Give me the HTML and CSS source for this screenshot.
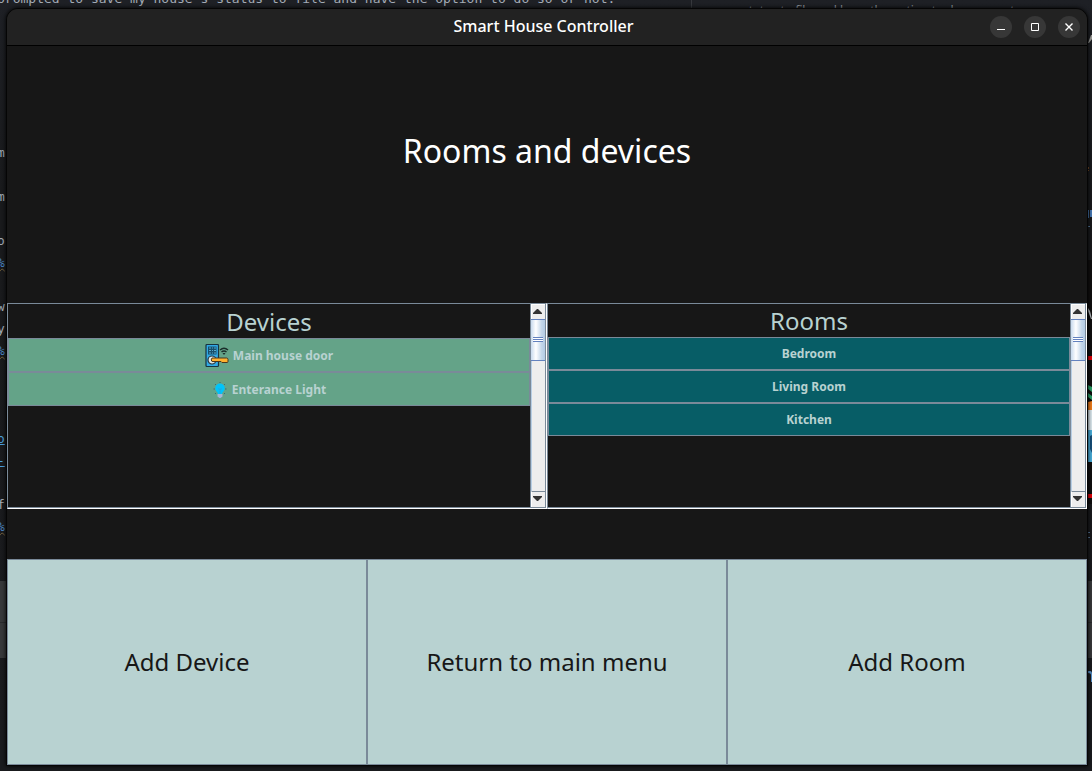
FILE: index.html
```html
<!DOCTYPE html>
<html lang="en">
<head>
<meta charset="utf-8">
<title>Smart House Controller</title>
<link rel="stylesheet" href="styles.css">
</head>
<body>
<div class="backdrop" aria-hidden="true">
<p class="code code-top">prompted to save my house's status to file and have the option to do so or not.</p>
<pre class="code code-left">m

m

o
<span class="key">%</span>

w
y
<span class="key">%</span>



<span class="link">o</span>
<span class="link">-</span>

f
<span class="key">%</span></pre>
<div class="divider"></div>
<p class="note">status to file and have the option to do so or not.</p>
<div class="dock"></div>
<svg class="edge" width="4" height="771" viewBox="0 0 4 771">
<rect y="260" width="4" height="244" fill="#100f0f"/>
<path d="M0 43l3-8h1v4l-3 4z" fill="#9c9c98"/>
<path d="M0 167h1v2H0zM0 170h1v1H0z" fill="#80512c"/>
<path d="M0 210h1v8H0zM2 210h2v7H2z" fill="#4779b4"/>
<path d="M0 226h2v1H0z" fill="#55799b"/>
<path d="M0 308l2 3 2 8h-1l-3-8z" fill="#b9bdc0"/>
<path d="M0 356h4v4H0zM0 494h4v4H0z" fill="#df0007"/>
<path d="M0 385l4 2v5l-4-3zM0 393l4 3v4l-4-3z" fill="#28a066"/>
<path d="M0 402l4-1v9H0z" fill="#f07d1c"/>
<path d="M0 410h4v20H0z" fill="#dce8ee"/>
<path d="M0 430h4v32H0z" fill="#48aedb"/>
<path d="M2 436l2-1v18l-2-4z" fill="#164e7a"/>
<path d="M0 532h2v1H0zM0 537h2v1H0z" fill="#59799b"/>
<path d="M0 671h2q2 0 2 3v8H3v-7q0-2-3-2z" fill="#5793cc"/>
</svg>
</div>

<div class="window">
<header class="titlebar">
<h1 class="caption">Smart House Controller</h1>
<div class="controls">
<button class="control" type="button" aria-label="Minimize"><svg width="22" height="22" viewBox="0 0 22 22"><path d="M7 13.5h8" stroke="#fff" fill="none"/></svg></button>
<button class="control" type="button" aria-label="Maximize"><svg width="22" height="22" viewBox="0 0 22 22"><path d="M7.5 7.5h7v7h-7z" stroke="#fff" fill="none"/></svg></button>
<button class="control" type="button" aria-label="Close"><svg width="22" height="22" viewBox="0 0 22 22"><path d="M7.5 7.500l7 7M14.500 7.500l-7 7" stroke="#fff" stroke-width="1.400" fill="none"/></svg></button>
</div>
</header>

<main class="content">
<h2 class="heading">Rooms and devices</h2>

<div class="panels">
<section class="panel">
<div class="list devices">
<h3 class="list-title">Devices</h3>
<button class="row" type="button">
<svg width="24" height="24" viewBox="0 0 24 24">
<path d="M2 .5h10.500q1 0 1 1v20q0 1-1 1H2q-1 0-1-1v-20q0-1 1-1z" fill="#31a9e5" stroke="#173340" stroke-width="1.200"/>
<path d="M3 2.500h8.500v8H3z" fill="#174f6c"/>
<path d="M4 4h2m1 0h1m1 0h2M4 6.500h2m1 0h1m1 0h2M4 9h2m1 0h1m1 0h2" stroke="#55a9cc"/>
<circle cx="7" cy="16" r="4" fill="#dbe7e8" stroke="#263238" stroke-width="1.200"/>
<path d="M7 14h14.500q1.500 0 1.500 1.500v2q0 1-1 1h-5l-1-1H7q-1.500-1.500 0-3.500z" fill="#ffb02e" stroke="#49371c"/>
<path d="M15 6q4-3.500 8 0M16.500 8q2.500-2 5 0" fill="none" stroke="#1b2d2a" stroke-width="1.500"/>
<path d="M17.500 9h3L19 11z" fill="#1b2d2a"/>
</svg>
<span>Main house door</span>
</button>
<button class="row" type="button">
<svg width="16" height="16" viewBox="0 0 16 16">
<path d="M8 0v1M3 2l1 1M13 2l-1 1M1.500 7h1.500M14.500 7H13M3 12l1-1M13 12l-1-1" stroke="#3d6c76"/>
<path d="M8 1.500a4.800 4.800 0 0 0-4.800 4.800c0 2 1.500 3.200 2.200 4.200L6 12h4l.600-1.500c.700-1 2.200-2.200 2.200-4.200A4.800 4.800 0 0 0 8 1.500z" fill="#00c4fa"/>
<path d="M6 7q1.500-1 2 1 .500-2 2-1M8 8v4" stroke="#2c9ed7" fill="none" stroke-width=".7"/>
<path d="M5.500 12h5v2.500L8.500 16h-1l-2-1.500z" fill="#a4b5d5"/>
</svg>
<span>Enterance Light</span>
</button>
</div>
<div class="scrollbar">
<button class="arrow" type="button" aria-label="Scroll devices up"><svg width="9" height="5" viewBox="0 0 9 5"><path d="M4 0h1l4 4v1H0V4z" fill="#333"/></svg></button>
<div class="thumb"><i class="grip"></i></div>
<div class="track"></div>
<button class="arrow down" type="button" aria-label="Scroll devices down"><svg width="9" height="5" viewBox="0 0 9 5"><path d="M0 0h9v1L5 5H4L0 1z" fill="#333"/></svg></button>
</div>
</section>

<section class="panel">
<div class="list rooms">
<h3 class="list-title">Rooms</h3>
<button class="row" type="button">Bedroom</button>
<button class="row" type="button">Living Room</button>
<button class="row" type="button">Kitchen</button>
</div>
<div class="scrollbar">
<button class="arrow" type="button" aria-label="Scroll rooms up"><svg width="9" height="5" viewBox="0 0 9 5"><path d="M4 0h1l4 4v1H0V4z" fill="#333"/></svg></button>
<div class="thumb"><i class="grip"></i></div>
<div class="track"></div>
<button class="arrow down" type="button" aria-label="Scroll rooms down"><svg width="9" height="5" viewBox="0 0 9 5"><path d="M0 0h9v1L5 5H4L0 1z" fill="#333"/></svg></button>
</div>
</section>
</div>

<nav class="actions">
<button class="action" type="button">Add Device</button>
<button class="action" type="button">Return to main menu</button>
<button class="action" type="button">Add Room</button>
</nav>
</main>
</div>
</body>
</html>
```

FILE: styles.css
```css
* {
  box-sizing: border-box;
}

body {
  margin: 0;
  min-height: 100vh;
  padding: 8px 4px 5px 6px;
  display: flex;
  background: #1a1b1e;
  font-family: "Noto Sans", "Open Sans", sans-serif;
  overflow: hidden;
}

h1, h2, h3, p, pre {
  margin: 0;
  font-weight: 400;
}

button {
  margin: 0;
  padding: 0;
  border: 0;
  font: inherit;
  color: inherit;
}

/* Editor visible behind the window */
.backdrop {
  position: absolute;
  inset: 0;
  overflow: hidden;
  background: linear-gradient(#1e2025, #191a1c 25%, #1a1b1e);
}

.code {
  position: absolute;
  left: -3px;
  font: 13px/22px "DejaVu Sans Mono", monospace;
  color: #a3abb5;
  white-space: pre;
}

.code-top {
  top: -12px;
}

.code-left {
  top: 142px;
}

.key {
  color: #4b86c4;
  text-decoration: underline wavy #77633c 1px;
}

.link {
  color: #4ba0dc;
  text-decoration: underline;
}

.divider {
  position: absolute;
  left: 691px;
  top: 0;
  width: 1px;
  height: 8px;
  background: #36383d;
}

.note {
  position: absolute;
  left: 743px;
  top: 3px;
  font-size: 12px;
  line-height: 16px;
  color: #8d949c;
}

.dock {
  position: absolute;
  left: 0;
  right: 0;
  top: 581px;
  height: 77px;
  background: linear-gradient(#37383a 41px, #2a2b2d 41px, #2a2b2d 42px, #37383a 42px);
}

.edge {
  position: absolute;
  right: 0;
  top: 0;
}

/* Window frame */
.window {
  position: relative;
  flex: 1;
  display: flex;
  flex-direction: column;
  border: 1px solid #050505;
  border-radius: 12px 12px 0 0;
  background: #171717;
  overflow: hidden;
  box-shadow: 0 0 4px #000;
}

.titlebar {
  display: grid;
  grid-template-columns: 1fr auto 1fr;
  align-items: center;
  height: 37px;
  padding-right: 7px;
  background: #222;
  border-bottom: 1px solid #000;
}

.caption {
  grid-column: 2;
  padding-bottom: 2px;
  font-size: 16px;
  line-height: 24px;
  font-weight: 500;
  color: #fff;
}

.controls {
  display: flex;
  justify-content: flex-end;
  gap: 12px;
}

.control {
  width: 22px;
  height: 22px;
  border-radius: 50%;
  background: #373737;
}

.control svg {
  display: block;
}

/* Content */
.content {
  flex: 1;
  display: grid;
  grid-template-rows: 257fr 206fr 50fr 206fr;
  min-height: 0;
}

.heading {
  padding-top: 81px;
  text-align: center;
  font-size: 32px;
  line-height: 48px;
  color: #fff;
}

.panels {
  display: grid;
  grid-template-columns: 1fr 1fr;
}

.panel {
  display: flex;
  border: 1px solid #7a8a99;
  box-shadow: inset -1px -1px #7a8a99;
  border-right-color: #fff;
  border-bottom-color: #fff;
  padding: 0 1px 1px 0;
}

.list {
  flex: 1;
  display: flex;
  flex-direction: column;
  color: #b8d2d1;
}

.list-title {
  height: 34px;
  text-align: center;
  font-size: 24px;
  line-height: 36px;
}

.row {
  display: flex;
  align-items: center;
  justify-content: center;
  gap: 4px;
  height: 34px;
  padding-top: 1px;
  border: 1px solid #7a8a99;
  background: #64a388;
  font-size: 12px;
  line-height: 16px;
  font-weight: 700;
}

.rooms .list-title {
  height: 33px;
  line-height: 34px;
}

.rooms .row {
  height: 33px;
  padding-top: 0;
  background: #075d66;
}

/* Scrollbar */
.scrollbar {
  width: 15px;
  display: flex;
  flex-direction: column;
  border-left: 1px solid #7a8a99;
  background: #eee;
}

.arrow {
  display: flex;
  align-items: center;
  justify-content: center;
  height: 15px;
  padding: 0 2px 2px 0;
  background: #eee;
  border: solid #fff;
  border-width: 1px 0 0 1px;
}

.down {
  height: 16px;
  border-top: 1px solid #7a8a99;
}

.thumb {
  display: flex;
  align-items: center;
  justify-content: center;
  height: 42px;
  padding-bottom: 1px;
  border: 1px solid #6382bf;
  border-right: 0;
  border-left: 0;
  background: linear-gradient(90deg, #c8daed, #fff 35%, #c4d7ea 75%, #b3cbe4);
}

.grip {
  width: 10px;
  height: 5px;
  background: repeating-linear-gradient(#6382bf 0 1px, #fff 1px 2px);
}

.track {
  flex: 1;
  border-left: 1px solid #b8cfe5;
}

/* Bottom actions */
.actions {
  grid-row: 4;
  display: grid;
  grid-template-columns: repeat(3, 1fr);
}

.action {
  border: 1px solid #7a8a99;
  background: #b8d2d1;
  color: #171717;
  font-size: 24px;
  line-height: 32px;
}
```
